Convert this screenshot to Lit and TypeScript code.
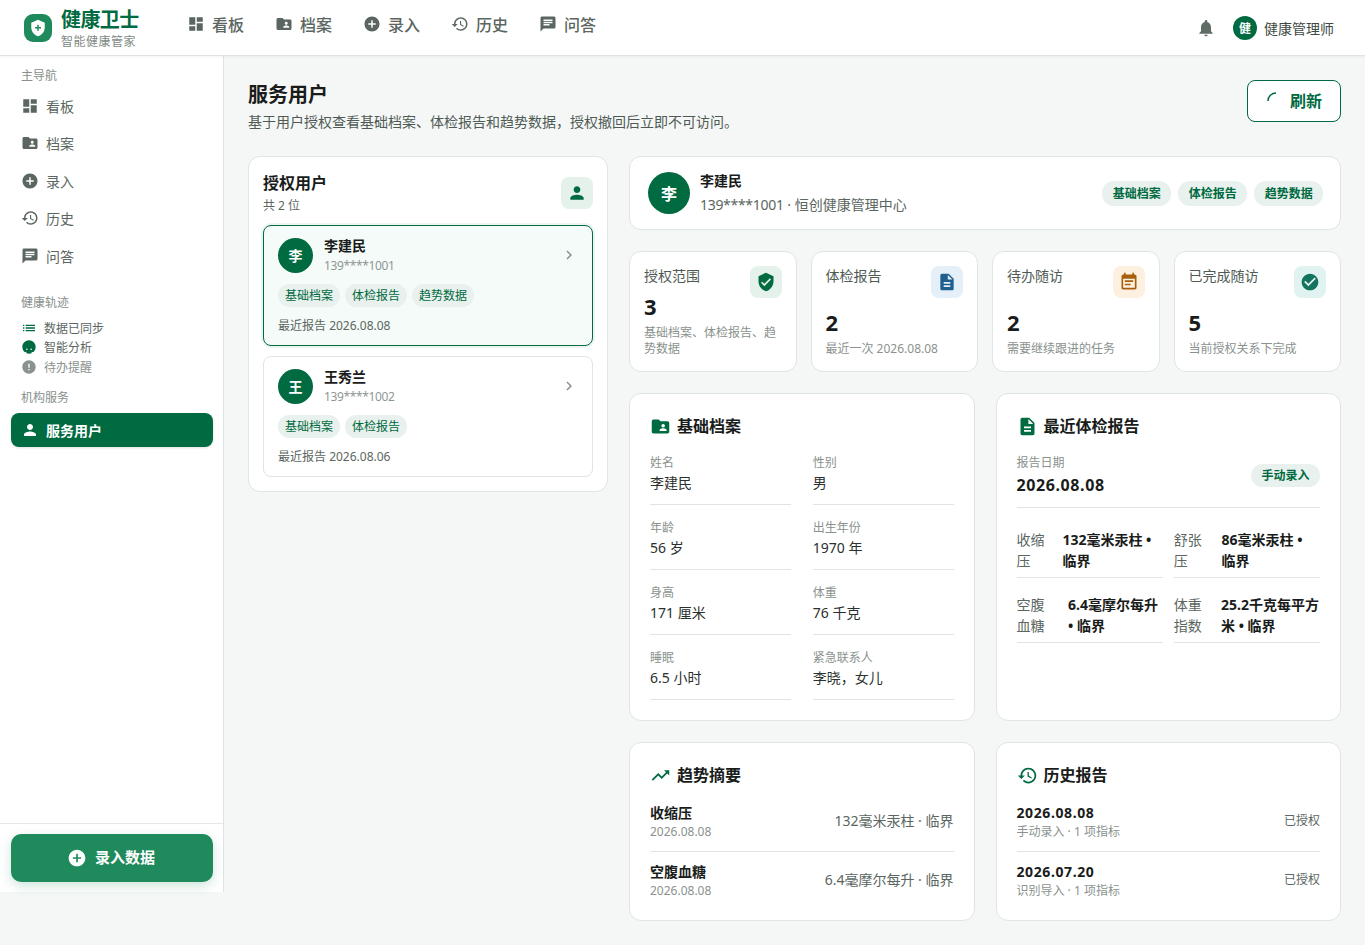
import {LitElement, html, css, svg} from 'lit'
import {customElement} from 'lit/decorators.js'

const ICONS: Record<string, string> = {
  dashboard: 'M3 13h8V3H3v10zm0 8h8v-6H3v6zm10 0h8V11h-8v10zm0-18v6h8V3h-8z',
  folder: 'M20 6h-8l-2-2H4c-1.1 0-1.99.9-1.99 2L2 18c0 1.1.9 2 2 2h16c1.1 0 2-.9 2-2V8c0-1.1-.9-2-2-2zm-5 3c1.1 0 2 .9 2 2s-.9 2-2 2-2-.9-2-2 .9-2 2-2zm4 8h-8v-1c0-1.33 2.67-2 4-2s4 .67 4 2v1z',
  add: 'M12 2C6.48 2 2 6.48 2 12s4.48 10 10 10 10-4.48 10-10S17.52 2 12 2zm5 11h-4v4h-2v-4H7v-2h4V7h2v4h4v2z',
  history: 'M13 3c-4.97 0-9 4.03-9 9H1l3.89 3.89.07.14L9 12H6c0-3.87 3.13-7 7-7s7 3.13 7 7-3.13 7-7 7c-1.93 0-3.68-.79-4.94-2.06l-1.42 1.42C8.27 19.99 10.51 21 13 21c4.97 0 9-4.03 9-9s-4.03-9-9-9zm-1 5v5l4.28 2.54.72-1.21-3.5-2.08V8H12z',
  chat: 'M20 2H4c-1.1 0-1.99.9-1.99 2L2 22l4-4h14c1.1 0 2-.9 2-2V4c0-1.1-.9-2-2-2zM6 9h12v2H6V9zm8 5H6v-2h8v2zm4-6H6V6h12v2z',
  bell: 'M12 22c1.1 0 2-.9 2-2h-4c0 1.1.89 2 2 2zm6-6v-5c0-3.07-1.64-5.64-4.5-6.32V4c0-.83-.67-1.5-1.5-1.5s-1.5.67-1.5 1.5v.68C7.63 5.36 6 7.92 6 11v5l-2 2v1h16v-1l-2-2z',
  person: 'M12 12c2.21 0 4-1.79 4-4s-1.79-4-4-4-4 1.79-4 4 1.79 4 4 4zm0 2c-2.67 0-8 1.34-8 4v2h16v-2c0-2.66-5.33-4-8-4z',
  chevron: 'M10 6L8.59 7.41 13.17 12l-4.58 4.59L10 18l6-6z',
  doc: 'M14 2H6c-1.1 0-1.99.9-1.99 2L4 20c0 1.1.89 2 1.99 2H18c1.1 0 2-.9 2-2V8l-6-6zm2 16H8v-2h8v2zm0-4H8v-2h8v2zm-3-5V3.5L18.5 9H13z',
  shield: 'M12 1L3 5v6c0 5.55 3.84 10.74 9 12 5.16-1.26 9-6.45 9-12V5l-9-4zm-2 16l-4-4 1.41-1.41L10 14.17l6.59-6.59L18 9l-8 8z',
  event: 'M17 10H7v2h10v-2zm2-7h-1V1h-2v2H8V1H6v2H5c-1.11 0-1.99.9-1.99 2L3 19c0 1.1.89 2 2 2h14c1.1 0 2-.9 2-2V5c0-1.1-.9-2-2-2zm0 16H5V8h14v11zm-5-5H7v2h7v-2z',
  check: 'M12 2C6.48 2 2 6.48 2 12s4.48 10 10 10 10-4.48 10-10S17.52 2 12 2zm-2 15l-5-5 1.41-1.41L10 14.17l7.59-7.59L19 8l-9 9z',
  trend: 'M16 6l2.29 2.29-4.88 4.88-4-4L2 16.59 3.41 18l6-6 4 4 6.3-6.29L22 12V6z',
  list: 'M3 13h2v-2H3v2zm0 4h2v-2H3v2zm0-8h2V7H3v2zm4 4h14v-2H7v2zm0 4h14v-2H7v2zM7 7v2h14V7H7z',
  error: 'M12 2C6.48 2 2 6.48 2 12s4.48 10 10 10 10-4.48 10-10S17.52 2 12 2zm1 15h-2v-2h2v2zm0-4h-2V7h2v6z',
  bot: 'M12 2C6.5 2 2 6.5 2 12c0 3.2 1.5 6 3.9 7.8L8 19v2.5c1.2.4 2.6.5 4 .5s2.8-.1 4-.5V19l2.100.8C20.500 18 22 15.200 22 12c0-5.500-4.500-10-10-10zM8.800 16.500a1.200 1.200 0 110-2.400 1.200 1.200 0 010 2.400zm6.400 0a1.200 1.200 0 110-2.400 1.200 1.200 0 010 2.400z',
}

const icon = (name: string, size = 18) => html`<svg class="ic" width=${size} height=${size} viewBox="0 0 24 24" fill="currentColor">${svg`<path d=${ICONS[name]}></path>`}</svg>`

const NAV = [['dashboard', '看板'], ['folder', '档案'], ['add', '录入'], ['history', '历史'], ['chat', '问答']]

const USERS = [
  {ch: '李', name: '李建民', phone: '139****1001', tags: ['基础档案', '体检报告', '趋势数据'], date: '2026.08.08', active: true},
  {ch: '王', name: '王秀兰', phone: '139****1002', tags: ['基础档案', '体检报告'], date: '2026.08.06', active: false},
]

const STATS = [
  {label: '授权范围', value: '3', note: '基础档案、体检报告、趋势数据', icon: 'shield', tone: 'green'},
  {label: '体检报告', value: '2', note: '最近一次 2026.08.08', icon: 'doc', tone: 'blue'},
  {label: '待办随访', value: '2', note: '需要继续跟进的任务', icon: 'event', tone: 'orange'},
  {label: '已完成随访', value: '5', note: '当前授权关系下完成', icon: 'check', tone: 'teal'},
]

const FIELDS = [
  ['姓名', '李建民'], ['性别', '男'], ['年龄', '56 岁'], ['出生年份', '1970 年'],
  ['身高', '171 厘米'], ['体重', '76 千克'], ['睡眠', '6.5 小时'], ['紧急联系人', '李晓，女儿'],
]

const METRICS = [
  ['收缩压', '132毫米汞柱 • 临界'], ['舒张压', '86毫米汞柱 • 临界'],
  ['空腹血糖', '6.4毫摩尔每升 • 临界'], ['体重指数', '25.2千克每平方米 • 临界'],
]

const TRENDS = [
  ['收缩压', '2026.08.08', '132毫米汞柱 · 临界'],
  ['空腹血糖', '2026.08.08', '6.4毫摩尔每升 · 临界'],
]

const REPORTS = [
  ['2026.08.08', '手动录入 · 1 项指标', '已授权'],
  ['2026.07.20', '识别导入 · 1 项指标', '已授权'],
]

@customElement('app-root')
export class AppRoot extends LitElement {
  static styles = css`
    :host {
      display: block;
      background: #f4f7f6;
      color: #191c1a;
      font-family: "Noto Sans", "Noto Sans CJK SC", sans-serif;
      font-size: 14px;
    }
    .ic { display: block; flex: none; }
    .topbar {
      height: 55px;
      display: flex;
      align-items: center;
      padding: 0 31px 0 24px;
      background: #fff;
      border-bottom: 1px solid #dfe3e1;
      box-shadow: 0 1px 2px rgba(0,0,0,.05);
      position: relative;
    }
    .logo { display: flex; align-items: center; gap: 9px; width: 163px; }
    .logo-mark {
      width: 28px;
      height: 28px;
      border-radius: 9px;
      background: #1f8a5c;
      display: grid;
      place-items: center;
    }
    .logo-text { padding-top: 3px; }
    .logo-title { font-size: 20px; font-weight: 700; line-height: 24px; color: #006a41; letter-spacing: -.6px; }
    .logo-sub { font-size: 12px; line-height: 16px; color: #7f8a85; margin-top: 2px; letter-spacing: .5px; }
    .topnav { display: flex; gap: 31px; padding-bottom: 8px; }
    .topnav a { display: flex; align-items: center; gap: 7px; font-size: 16px; font-weight: 500; color: #5b6661; }
    .top-right { margin-left: auto; display: flex; align-items: center; color: #5f6b65; }
    .top-avatar {
      width: 24px;
      height: 24px;
      border-radius: 50%;
      background: #006a41;
      color: #fff;
      font-size: 12px;
      font-weight: 700;
      display: grid;
      place-items: center;
      margin: 0 7px 0 17px;
    }
    .top-name { font-size: 14px; color: #404943; }

    .shell { display: grid; grid-template-columns: 224px 1fr; align-items: start; }
    .side {
      height: 836px;
      box-sizing: border-box;
      background: #fff;
      border-right: 1px solid #dfe3e1;
      display: flex;
      flex-direction: column;
      padding-top: 11px;
    }
    .side-label { font-size: 12px; line-height: 17px; color: #87908b; padding-left: 21px; }
    .side-label.track { margin-top: 21.4px; }
    .side-label.org { margin-top: 13px; }
    .side-nav { display: flex; flex-direction: column; gap: 3.5px; padding: 4.6px 10px 0 11px; }
    .side-nav.svc { padding-top: 7px; }
    .side-nav a {
      height: 34px;
      display: flex;
      align-items: center;
      gap: 7px;
      padding-left: 10px;
      border-radius: 8px;
      color: #5b6661;
    }
    .side-nav a.on {
      background: #006a41;
      color: #fff;
      font-weight: 700;
      box-shadow: 0 1px 3px rgba(0,0,0,.12);
    }
    .side-status { display: flex; flex-direction: column; padding: 7px 0 0 21px; font-size: 12px; color: #5b6661; }
    .side-status div { display: flex; align-items: center; gap: 7px; height: 19.5px; }
    .side-status .green { color: #006a41; }
    .side-status .dim, .side-status .dim svg { color: #8a928e; }
    .side-foot { margin-top: auto; border-top: 1px solid #e4e8e6; padding: 10px 10px 10px 11px; }
    .add-btn {
      height: 48px;
      box-sizing: border-box;
      padding-right: 2px;
      border-radius: 10px;
      background: #1f8a5c;
      color: #fff;
      font-size: 15px;
      font-weight: 700;
      display: flex;
      align-items: center;
      justify-content: center;
      gap: 8px;
      box-shadow: 0 4px 12px rgba(31,138,92,.22);
    }
    .add-btn span { padding-bottom: 3px; }

    .main { padding: 24px; min-width: 0; }
    .page-head { display: flex; justify-content: space-between; align-items: flex-start; margin-bottom: 24px; }
    .page-head h1 { margin: 0; font-size: 20px; line-height: 30px; font-weight: 700; }
    .page-head p { margin: 2px 0 0; font-size: 14px; line-height: 20px; color: #505a55; }
    .refresh {
      width: 94px;
      height: 42px;
      box-sizing: border-box;
      border: 1px solid #006a41;
      border-radius: 8px;
      background: #fff;
      color: #006a41;
      font-size: 16px;
      font-weight: 700;
      display: flex;
      align-items: center;
      justify-content: center;
      gap: 9px;
      padding: 0 3px 2px 0;
    }
    .body { display: grid; grid-template-columns: 360px 1fr; gap: 21px; align-items: start; }
    .card { background: #fff; border: 1px solid #dfe5e2; border-radius: 12px; box-sizing: border-box; }

    .users { padding: 14px; }
    .users-head { display: flex; justify-content: space-between; align-items: flex-start; padding-top: 1px; margin-bottom: 11px; }
    .users-head h2 { margin: 0; font-size: 16px; line-height: 22px; font-weight: 700; }
    .users-head p { margin: 3px 0 0; font-size: 12px; line-height: 17px; color: #5b6661; }
    .users-head .box { margin-top: 5px; }
    .box { width: 32px; height: 32px; border-radius: 8px; display: grid; place-items: center; flex: none; }
    .box.green { background: #e4f2eb; color: #006a41; }
    .box.blue { background: #e5eff8; color: #1f5f8f; }
    .box.orange { background: #fdf0e0; color: #a85f0d; }
    .box.teal { background: #e0f3f0; color: #14735f; }
    .user {
      border: 1px solid #dfe5e2;
      border-radius: 8px;
      padding: 10px 14px 11px;
      margin-bottom: 10px;
    }
    .user:last-child { margin-bottom: 0; }
    .user.on { background: #f5fbf8; border-color: #006a41; box-shadow: 0 0 0 2px #edf5f1; }
    .user-top { display: flex; align-items: center; gap: 11px; color: #8a928e; }
    .avatar {
      border-radius: 50%;
      background: #006a41;
      color: #fff;
      font-weight: 700;
      display: grid;
      place-items: center;
      flex: none;
    }
    .user-top .avatar { width: 35px; height: 35px; font-size: 14px; }
    .user-name { font-weight: 700; line-height: 20px; color: #191c1a; }
    .user-phone { font-size: 12px; line-height: 17px; color: #8f9793; padding-top: 1px; letter-spacing: -.37px; }
    .user-top .ic { margin-left: auto; }
    .tags { display: flex; gap: 5px; margin-top: 10px; }
    .tag {
      height: 23px;
      line-height: 23px;
      padding: 0 7px;
      border-radius: 12px;
      background: #e8f1ed;
      color: #006a41;
      font-size: 12px;
    }
    .user-date { font-size: 12px; line-height: 17px; color: #5b6661; margin-top: 10px; }

    .right { display: flex; flex-direction: column; gap: 21px; min-width: 0; }
    .profile { height: 74px; display: flex; align-items: center; padding: 0 17px 0 18px; gap: 10px; }
    .profile .avatar { width: 42px; height: 42px; font-size: 16px; }
    .profile-name { font-weight: 700; line-height: 20px; }
    .profile-sub { color: #5b6661; line-height: 20px; margin-top: 4px; }
    .profile-sub span { letter-spacing: -.3px; }
    .profile .tags { margin: 0 0 0 auto; gap: 7.5px; }
    .profile .tag { height: 25px; line-height: 25px; padding: 0 10.25px; font-weight: 700; }

    .stats { display: grid; grid-template-columns: repeat(4, 1fr); gap: 14px; }
    .stat { height: 121px; padding: 14px; display: flex; flex-direction: column; }
    .stat-top { display: flex; justify-content: space-between; color: #505a55; line-height: 20px; margin-bottom: -5px; }
    .stat-body { margin-top: auto; }
    .stat-value { font-size: 22px; font-weight: 700; line-height: 24px; }
    .stat-note { font-size: 12px; line-height: 16px; color: #8a928e; margin-top: 7px; }

    .two { display: grid; grid-template-columns: 1fr 1fr; gap: 21px; }
    .panel { padding: 21px 20px 20px; }
    .panel-title { display: flex; align-items: center; gap: 6px; font-size: 16px; font-weight: 700; line-height: 22px; margin-bottom: 16px; }
    .panel-title .ic { color: #006a41; }
    .fields { display: grid; grid-template-columns: 1fr 1fr; column-gap: 22px; row-gap: 13px; }
    .field { border-bottom: 1px solid #dfe5e2; height: 52px; box-sizing: border-box; padding-top: 1px; }
    .field span { display: block; font-size: 12px; line-height: 17px; color: #8a928e; }
    .field b { display: block; font-weight: 400; line-height: 20px; margin-top: 2px; color: #2a302d; }

    .rep-head { display: flex; justify-content: space-between; align-items: center; padding: 1px 0 11px; border-bottom: 1px solid #dfe5e2; }
    .rep-head span { display: block; font-size: 12px; line-height: 17px; color: #8a928e; }
    .rep-head b { display: block; font-size: 16px; line-height: 22px; margin-top: 3px; letter-spacing: .6px; }
    .rep-head .tag { font-weight: 700; padding: 0 10.5px; }
    .metrics { display: grid; grid-template-columns: 1fr 1fr; column-gap: 11px; row-gap: 16px; margin-top: 21px; }
    .metric { display: flex; justify-content: space-between; gap: 11px; line-height: 21px; padding-bottom: 6px; border-bottom: 1px solid #dfe5e2; }
    .metric span { color: #5b6661; }
    .metric b { font-weight: 700; }

    .rows { margin-top: -9px; margin-bottom: -10px; }
    .rows .row { display: flex; justify-content: space-between; align-items: center; height: 58px; border-bottom: 1px solid #dfe5e2; }
    .rows .row:last-child { border-bottom: 0; }
    .row > div { padding-bottom: 1px; }
    .row b { display: block; line-height: 19px; margin: -1px 0 1px; }
    .row b.date { letter-spacing: .6px; }
    .row small { display: block; font-size: 12px; line-height: 17px; color: #8a928e; }
    .row > span { color: #5b6661; padding-bottom: 4px; }
    .row > span.sm { font-size: 12px; }
  `

  render() {
    return html`
      <header class="topbar">
        <div class="logo">
          <div class="logo-mark">
            <svg width="18" height="18" viewBox="0 0 24 24"><path fill="#fff" d="M12 1L3 5v6c0 5.55 3.84 10.74 9 12 5.16-1.26 9-6.45 9-12V5l-9-4z"></path><path fill="#1f8a5c" d="M11 7.5h2v3h3v2h-3v3h-2v-3H8v-2h3z"></path></svg>
          </div>
          <div class="logo-text">
            <div class="logo-title">健康卫士</div>
            <div class="logo-sub">智能健康管家</div>
          </div>
        </div>
        <nav class="topnav">${NAV.map(([i, t]) => html`<a>${icon(i)}${t}</a>`)}</nav>
        <div class="top-right">
          ${icon('bell', 20)}
          <div class="top-avatar">健</div>
          <div class="top-name">健康管理师</div>
        </div>
      </header>
      <div class="shell">
        <aside class="side">
          <div class="side-label">主导航</div>
          <div class="side-nav">${NAV.map(([i, t]) => html`<a>${icon(i)}${t}</a>`)}</div>
          <div class="side-label track">健康轨迹</div>
          <div class="side-status">
            <div><span class="green">${icon('list', 16)}</span>数据已同步</div>
            <div><span class="green">${icon('bot', 16)}</span>智能分析</div>
            <div class="dim">${icon('error', 16)}待办提醒</div>
          </div>
          <div class="side-label org">机构服务</div>
          <div class="side-nav svc"><a class="on">${icon('person')}服务用户</a></div>
          <div class="side-foot"><div class="add-btn">${icon('add', 20)}<span>录入数据</span></div></div>
        </aside>
        <main class="main">
          <div class="page-head">
            <div>
              <h1>服务用户</h1>
              <p>基于用户授权查看基础档案、体检报告和趋势数据，授权撤回后立即不可访问。</p>
            </div>
            <div class="refresh">
              <svg width="18" height="18" viewBox="0 0 18 18" fill="none"><path d="M5 10A8 8 0 0 1 13 2" stroke="#006a41" stroke-width="1.5"></path></svg>
              刷新
            </div>
          </div>
          <div class="body">
            <section class="card users">
              <div class="users-head">
                <div><h2>授权用户</h2><p>共 2 位</p></div>
                <div class="box green">${icon('person', 20)}</div>
              </div>
              ${USERS.map(u => html`
                <div class="user ${u.active ? 'on' : ''}">
                  <div class="user-top">
                    <div class="avatar">${u.ch}</div>
                    <div><div class="user-name">${u.name}</div><div class="user-phone">${u.phone}</div></div>
                    ${icon('chevron', 18)}
                  </div>
                  <div class="tags">${u.tags.map(t => html`<span class="tag">${t}</span>`)}</div>
                  <div class="user-date">最近报告 ${u.date}</div>
                </div>
              `)}
            </section>
            <div class="right">
              <section class="card profile">
                <div class="avatar">李</div>
                <div><div class="profile-name">李建民</div><div class="profile-sub"><span>139****1001</span> · 恒创健康管理中心</div></div>
                <div class="tags">${USERS[0].tags.map(t => html`<span class="tag">${t}</span>`)}</div>
              </section>
              <div class="stats">
                ${STATS.map(s => html`
                  <section class="card stat">
                    <div class="stat-top"><span>${s.label}</span><div class="box ${s.tone}">${icon(s.icon, 20)}</div></div>
                    <div class="stat-body"><div class="stat-value">${s.value}</div><div class="stat-note">${s.note}</div></div>
                  </section>
                `)}
              </div>
              <div class="two">
                <section class="card panel">
                  <div class="panel-title">${icon('folder', 21)}基础档案</div>
                  <div class="fields">
                    ${FIELDS.map(([k, v]) => html`<div class="field"><span>${k}</span><b>${v}</b></div>`)}
                  </div>
                </section>
                <section class="card panel">
                  <div class="panel-title">${icon('doc', 21)}最近体检报告</div>
                  <div class="rep-head">
                    <div><span>报告日期</span><b>2026.08.08</b></div>
                    <div class="tag">手动录入</div>
                  </div>
                  <div class="metrics">
                    ${METRICS.map(([k, v]) => html`<div class="metric"><span>${k}</span><b>${v}</b></div>`)}
                  </div>
                </section>
              </div>
              <div class="two">
                <section class="card panel">
                  <div class="panel-title">${icon('trend', 21)}趋势摘要</div>
                  <div class="rows">
                    ${TRENDS.map(([a, b, c]) => html`<div class="row"><div><b>${a}</b><small>${b}</small></div><span>${c}</span></div>`)}
                  </div>
                </section>
                <section class="card panel">
                  <div class="panel-title">${icon('history', 21)}历史报告</div>
                  <div class="rows">
                    ${REPORTS.map(([a, b, c]) => html`<div class="row"><div><b class="date">${a}</b><small>${b}</small></div><span class="sm">${c}</span></div>`)}
                  </div>
                </section>
              </div>
            </div>
          </div>
        </main>
      </div>
    `
  }
}

declare global {
  interface HTMLElementTagNameMap {
    'app-root': AppRoot
  }
}
